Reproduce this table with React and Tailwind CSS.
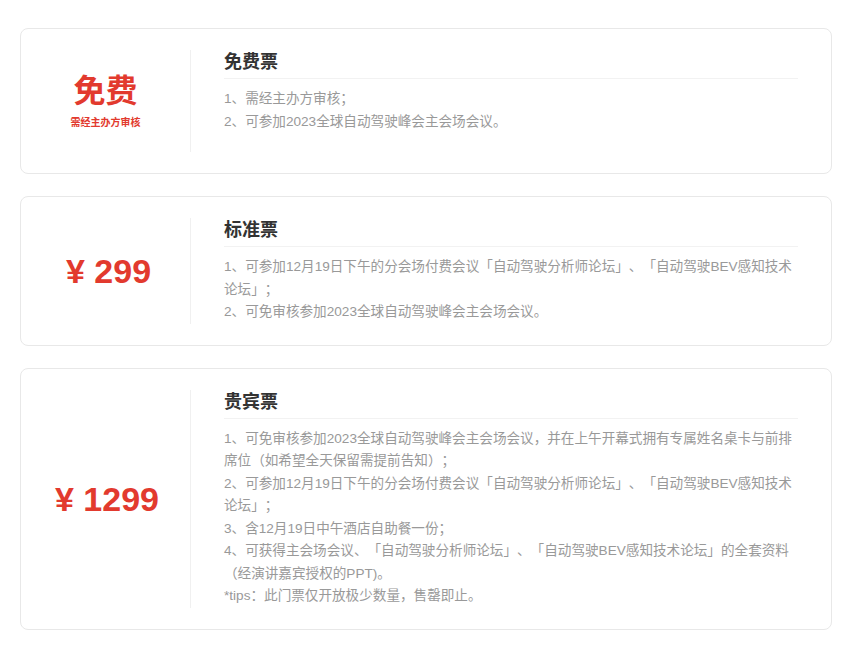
import React from "react";

const font = { fontFamily: '"Liberation Sans", "Noto Sans CJK SC", sans-serif' };

function Card({ left, title, lines, minH }) {
  return (
    <div className="flex rounded-lg border border-[#e8e8e8] bg-white py-[21px]">
      <div className="flex w-[169px] shrink-0 flex-col items-center justify-center">{left}</div>
      <div className={`flex-1 border-l border-[#f0f0f0] pl-[33px] pr-[33px] ${minH ? "min-h-[102px]" : ""}`}>
        <div className="border-b border-[#f2f2f2] pb-1 text-[18px] font-bold leading-6 text-[#333]">{title}</div>
        <div className="mt-[9px] text-[13.6px] leading-[22.5px] text-[#999] [text-spacing-trim:space-all]">
          {lines.map((l, i) => (
            <p key={i}>{l}</p>
          ))}
        </div>
      </div>
    </div>
  );
}

export default function App() {
  return (
    <div className="min-h-screen bg-white px-5 pt-7 pb-5" style={font}>
      <div className="flex flex-col gap-[22px]">
        <Card
          minH
          left={
            <>
              <div className="text-[32px] font-bold leading-[36px] text-[#e23a2e]">免费</div>
              <div className="mt-[7px] text-[10px] font-bold leading-[14px] text-[#e23a2e]">需经主办方审核</div>
            </>
          }
          title="免费票"
          lines={["1、需经主办方审核；", "2、可参加2023全球自动驾驶峰会主会场会议。"]}
        />
        <Card
          left={<div className="pl-[6px] text-[34px] font-bold leading-[40px] text-[#e23a2e]">¥&nbsp;299</div>}
          title="标准票"
          lines={[
            "1、可参加12月19日下午的分会场付费会议「自动驾驶分析师论坛」、「自动驾驶BEV感知技术论坛」；",
            "2、可免审核参加2023全球自动驾驶峰会主会场会议。",
          ]}
        />
        <Card
          left={<div className="pl-[3px] text-[34px] font-bold leading-[40px] text-[#e23a2e]">¥&nbsp;1299</div>}
          title="贵宾票"
          lines={[
            "1、可免审核参加2023全球自动驾驶峰会主会场会议，并在上午开幕式拥有专属姓名桌卡与前排席位（如希望全天保留需提前告知）；",
            "2、可参加12月19日下午的分会场付费会议「自动驾驶分析师论坛」、「自动驾驶BEV感知技术论坛」；",
            "3、含12月19日中午酒店自助餐一份；",
            "4、可获得主会场会议、「自动驾驶分析师论坛」、「自动驾驶BEV感知技术论坛」的全套资料（经演讲嘉宾授权的PPT)。",
            "*tips：此门票仅开放极少数量，售罄即止。",
          ]}
        />
      </div>
    </div>
  );
}
